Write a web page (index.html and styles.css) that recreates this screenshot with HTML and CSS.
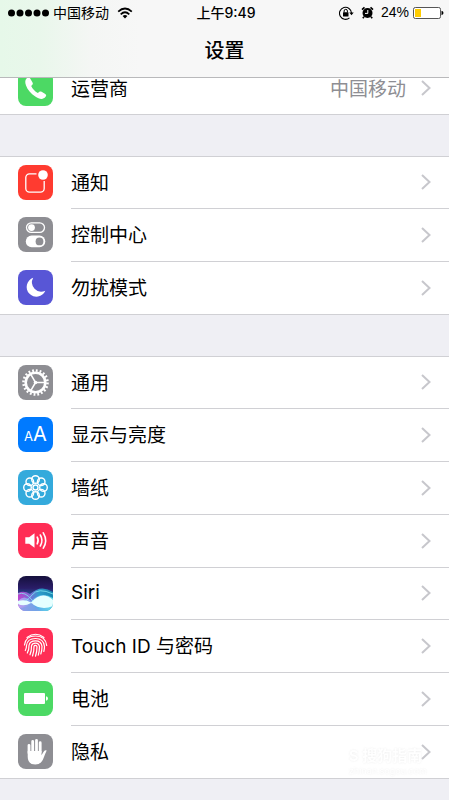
FILE: index.html
```html
<!DOCTYPE html>
<html lang="zh-CN">
<head>
    <meta charset="UTF-8">
    <meta name="viewport" content="width=device-width, initial-scale=1.0">
    <title>设置</title>
    <link rel="stylesheet" href="styles.css">
</head>
<body>
    <header class="top">
        <div class="status">
            <div class="status-left">
                <svg class="signal" width="41" height="8" viewBox="0 0 41 8"><circle cx="3.5" cy="4" r="3.5"/><circle cx="12" cy="4" r="3.5"/><circle cx="20.500" cy="4" r="3.5"/><circle cx="29" cy="4" r="3.5"/><circle cx="37.500" cy="4" r="3.5"/></svg>
                <span>中国移动</span>
                <svg class="wifi" width="16" height="12" viewBox="0 0 16 12"><path d="M1.200 4.700Q8-1.700 14.800 4.700" fill="none" stroke="#000" stroke-width="1.700"/><path d="M3.700 7.300Q8 3.200 12.300 7.300" fill="none" stroke="#000" stroke-width="1.700"/><path d="M5.600 9Q8 7 10.400 9L8 11.500Z"/></svg>
            </div>
            <time class="clock">上午9:49</time>
            <div class="status-right">
                <svg width="15" height="14" viewBox="0 0 15 14"><path d="M10.500 11.800A6 6 0 1 1 12.500 7" fill="none" stroke="#000" stroke-width="1.100"/><path d="M10.300 6.400h4.400l-2.200 2.900Z"/><rect x="4" y="6.200" width="5.500" height="4.300" rx=".5"/><path d="M5.100 6.500V5a1.650 1.650 0 0 1 3.300 0v1.500" fill="none" stroke="#000"/></svg>
                <svg class="alarm" width="13" height="13" viewBox="0 0 13 13"><circle cx="6.500" cy="7" r="5"/><path d="M1 3.700 3.500 1.300M12 3.700 9.500 1.300M3 10.800l-1.200 1.500M10 10.800l1.200 1.500" stroke="#000" stroke-width="1.600"/><path d="M6.800 4v3.400H4" fill="none" stroke="#fff"/></svg>
                <span class="percent">24%</span>
                <svg width="31" height="12" viewBox="0 0 31 12"><rect x=".5" y=".5" width="27" height="11" rx="1.800" fill="#fff" stroke="#555"/><path d="M2 2h6v8H2Z" fill="#fc0"/><path d="M28.500 3.800q2 .6 2 2.200t-2 2.200Z"/></svg>
            </div>
        </div>
        <h1>设置</h1>
    </header>

    <main>
        <ul class="group">
            <li><a href="#carrier">
                <svg class="icon" viewBox="0 0 35 35"><rect width="35" height="35" rx="8" fill="#4cd964"/><path d="M8.500 7.500C10 6 11.500 6.300 12.500 8l2 3.500c.8 1.400.2 2.100-1.300 3.500 1.500 3.200 3.700 5.400 6.600 7 1.500-1.600 2.400-2 3.800-1.200l3.300 2c1.400.9 1.700 1.700.7 3-2.500 3.200-6.200 2.500-10.300-.2-4.400-2.900-7.700-6.600-9.300-11-.9-2.700-1.200-5.300.5-7.100Z" fill="#fff"/></svg>
                <span class="label">运营商</span><span class="value">中国移动</span>
                <svg class="arrow" viewBox="0 0 10 16"><path d="m1 1 7.500 7L1 15"/></svg>
            </a></li>
        </ul>

        <ul class="group">
            <li><a href="#notifications">
                <svg class="icon" viewBox="0 0 35 35"><rect width="35" height="35" rx="8" fill="#ff3b30"/><path d="M18.500 8.800H11.500A3.700 3.700 0 0 0 7.800 12.500v11a3.700 3.700 0 0 0 3.700 3.700h11a3.700 3.700 0 0 0 3.700-3.700V16" fill="none" stroke="#fff" stroke-width="1.300"/><circle cx="25" cy="10" r="4.800" fill="#fff"/></svg>
                <span class="label">通知</span>
                <svg class="arrow" viewBox="0 0 10 16"><path d="m1 1 7.500 7L1 15"/></svg>
            </a></li>
            <li><a href="#control-center">
                <svg class="icon" viewBox="0 0 35 35"><rect width="35" height="35" rx="8" fill="#8e8e93"/><rect x="8.500" y="5.800" width="18" height="9.600" rx="4.800" fill="none" stroke="#fff" stroke-width="1.300"/><circle cx="13.500" cy="10.600" r="3.400" fill="#fff"/><rect x="7.800" y="18.600" width="19.500" height="11.600" rx="5.800" fill="#fff"/><circle cx="21.500" cy="24.400" r="3.900" fill="#8e8e93"/></svg>
                <span class="label">控制中心</span>
                <svg class="arrow" viewBox="0 0 10 16"><path d="m1 1 7.500 7L1 15"/></svg>
            </a></li>
            <li><a href="#do-not-disturb">
                <svg class="icon" viewBox="0 0 35 35"><rect width="35" height="35" rx="8" fill="#5856d6"/><path d="M15.200 7.800A9.700 9.700 0 1 0 27.300 20.700 9.300 9.300 0 0 1 15.200 7.800Z" fill="#fff"/></svg>
                <span class="label">勿扰模式</span>
                <svg class="arrow" viewBox="0 0 10 16"><path d="m1 1 7.500 7L1 15"/></svg>
            </a></li>
        </ul>

        <ul class="group">
            <li><a href="#general">
                <svg class="icon" viewBox="0 0 35 35"><rect width="35" height="35" rx="8" fill="#8e8e93"/><g fill="none" stroke="#fff"><circle cx="17.500" cy="17.500" r="12" stroke-width="2.600" stroke-dasharray="1.800 1.970"/><circle cx="17.500" cy="17.500" r="9.800" stroke-width="2.600"/><path d="M17.500 17.500h9M17.500 17.500l-4.700-8.100M17.500 17.500l-4.700 8.100" stroke-width="1.500"/></g><circle cx="17.500" cy="17.500" r="1.800" fill="#fff"/></svg>
                <span class="label">通用</span>
                <svg class="arrow" viewBox="0 0 10 16"><path d="m1 1 7.500 7L1 15"/></svg>
            </a></li>
            <li><a href="#display">
                <svg class="icon" viewBox="0 0 35 35"><rect width="35" height="35" rx="8" fill="#007aff"/><g class="letters"><text x="6" y="24" font-size="13">A</text><text x="15" y="24" font-size="20">A</text></g></svg>
                <span class="label">显示与亮度</span>
                <svg class="arrow" viewBox="0 0 10 16"><path d="m1 1 7.500 7L1 15"/></svg>
            </a></li>
            <li><a href="#wallpaper">
                <svg class="icon" viewBox="0 0 35 35"><rect width="35" height="35" rx="8" fill="#34aadc"/><g fill="none" stroke="#fff" stroke-width="1.400"><circle cx="17.500" cy="9.500" r="3.800"/><circle cx="23.200" cy="11.800" r="3.800"/><circle cx="25.500" cy="17.500" r="3.800"/><circle cx="23.200" cy="23.200" r="3.800"/><circle cx="17.500" cy="25.500" r="3.800"/><circle cx="11.800" cy="23.200" r="3.800"/><circle cx="9.500" cy="17.500" r="3.800"/><circle cx="11.800" cy="11.800" r="3.800"/><circle cx="17.500" cy="17.500" r="2.500"/></g></svg>
                <span class="label">墙纸</span>
                <svg class="arrow" viewBox="0 0 10 16"><path d="m1 1 7.500 7L1 15"/></svg>
            </a></li>
            <li><a href="#sounds">
                <svg class="icon" viewBox="0 0 35 35"><rect width="35" height="35" rx="8" fill="#ff2d55"/><path d="M7.300 14.200h3.900l5.300-3.900v14.400l-5.300-3.900H7.300Z" fill="#fff"/><path d="M19.200 14.200q1.900 3.300 0 6.600M22.300 12q3.300 5.500 0 11M25.300 9.800q4.700 7.700 0 15.400" fill="none" stroke="#fff" stroke-width="1.600" stroke-linecap="round"/></svg>
                <span class="label">声音</span>
                <svg class="arrow" viewBox="0 0 10 16"><path d="m1 1 7.500 7L1 15"/></svg>
            </a></li>
            <li><a href="#siri">
                <svg class="icon" viewBox="0 0 35 35">
                    <defs>
                        <clipPath id="tile"><rect width="35" height="35" rx="8"/></clipPath>
                        <linearGradient id="night" x2="0" y2="1"><stop stop-color="#15103c"/><stop offset=".35" stop-color="#2a1d68"/><stop offset=".65" stop-color="#236fb2"/><stop offset="1" stop-color="#8edbf1"/></linearGradient>
                        <linearGradient id="wave"><stop stop-color="#e03bd6"/><stop offset=".35" stop-color="#8f6fe4"/><stop offset=".6" stop-color="#2fb4dc"/><stop offset="1" stop-color="#1795b8"/></linearGradient>
                        <linearGradient id="low"><stop stop-color="#c79af0"/><stop offset=".5" stop-color="#5da8ea"/><stop offset="1" stop-color="#65dbe9"/></linearGradient>
                    </defs>
                    <g clip-path="url(#tile)">
                        <rect width="35" height="35" fill="url(#night)"/>
                        <path d="M0 17q6-3 12 1 11-10 23-2v19H0Z" fill="url(#wave)" opacity=".8"/>
                        <path d="M0 25q6-7 13 0Q23 15 35 22v13H0Z" fill="url(#low)"/>
                        <path d="M0 18q7-3 14 6t21 4M0 27q8 0 14-8t21-1" fill="none" stroke="#83e9f3" stroke-width=".8"/>
                        <path d="M0 25q7-2 13 1.500Q24 14 35 24v6Q23 35 13 27 6 31 0 28Z" fill="#e5ffff"/>
                        <path d="M0 32q9 0 14-5 3 5 9 8H0Z" fill="#7e9fe5" opacity=".7"/>
                    </g>
                </svg>
                <span class="label">Siri</span>
                <svg class="arrow" viewBox="0 0 10 16"><path d="m1 1 7.500 7L1 15"/></svg>
            </a></li>
            <li><a href="#touch-id">
                <svg class="icon" viewBox="0 0 35 35"><rect width="35" height="35" rx="8" fill="#ff2d55"/><g fill="none" stroke="#fff" stroke-width="1.200" stroke-linecap="round"><path d="M9 9.500q8.500-6.500 17 0"/><path d="M6.500 17q1-9 11-9t11.200 9.500"/><path d="M7.300 22.500q1.200-2 1.200-5 .8-7 9-7t9 8q0 2.500-.7 5"/><path d="M9.300 25q1.800-3.200 1.700-7.500.8-4.600 6.500-4.600t6.500 5.400q0 4.500-1.200 7.700"/><path d="M12 26.800q1.700-4 1.500-9 .7-2.600 4-2.600t4 3.400q0 4.500-1.200 8.600"/><path d="M14.500 28q1.700-5 1.500-9.700.2-1 1.500-1t1.500 1.500q0 4.700-1.500 9.400"/></g></svg>
                <span class="label">Touch ID 与密码</span>
                <svg class="arrow" viewBox="0 0 10 16"><path d="m1 1 7.500 7L1 15"/></svg>
            </a></li>
            <li><a href="#battery">
                <svg class="icon" viewBox="0 0 35 35"><rect width="35" height="35" rx="8" fill="#4cd964"/><rect x="6" y="12" width="21" height="11" rx="1" fill="#fff"/><path d="M28 15.200q2 .5 2 2.300t-2 2.300Z" fill="#fff"/></svg>
                <span class="label">电池</span>
                <svg class="arrow" viewBox="0 0 10 16"><path d="m1 1 7.500 7L1 15"/></svg>
            </a></li>
            <li><a href="#privacy">
                <svg class="icon" viewBox="0 0 35 35"><rect width="35" height="35" rx="8" fill="#8e8e93"/><g fill="none" stroke="#fff" stroke-width="2.800" stroke-linecap="round"><path d="M11 19v-7.700M14.700 18V7.500M18.500 18V6.300M22.200 18V8.700"/></g><path d="M9.700 17h13.800v4.200q1.400-2.400 2.500-4 1.100-1.400 2.700-.7-1.700 3.600-3 7.200-2.300 6.800-8.400 6.800-7.600 0-7.600-7.700Z" fill="#fff"/></svg>
                <span class="label">隐私</span>
                <svg class="arrow" viewBox="0 0 10 16"><path d="m1 1 7.500 7L1 15"/></svg>
            </a></li>
        </ul>
    </main>

    <div class="watermark">
        <strong><i>S</i> 搜狗指南</strong>
        <small>zhinan.sogou.com</small>
    </div>
</body>
</html>
```
FILE: styles.css
```css
* {
    box-sizing: border-box;
}

body {
    margin: 0;
    background-color: #efeff4;
    color: #000;
    font-family: Inter, "Noto Sans CJK SC", sans-serif;
    font-size: 19px;
}

svg {
    display: block;
    flex-shrink: 0;
}

/* Status bar and title stay above the list */
.top {
    position: fixed;
    top: 0;
    left: 0;
    right: 0;
    z-index: 1;
    height: 78px;
    border-bottom: 1px solid #b9b9bb;
    background: linear-gradient(90deg, #e6f8e9 0, #e9f7eb 40px, #f4f6f4 90px, #f7f7f7 140px);
}

.status {
    display: grid;
    grid-template-columns: 1fr auto 1fr;
    align-items: center;
    height: 25px;
    padding: 0 5px 0 8px;
    font-size: 14px;
    line-height: 25px;
}

.status-left,
.status-right {
    display: flex;
    align-items: center;
}

.status-right {
    justify-content: flex-end;
}

.signal {
    margin-right: 4px;
}

.wifi {
    margin-left: 8px;
}

.clock {
    font-weight: 500;
}

.alarm {
    margin: 0 7px;
}

.percent {
    margin-right: 4px;
    font-family: "Liberation Sans", sans-serif;
}

h1 {
    margin: 0;
    font-size: 20px;
    font-weight: 500;
    line-height: 52px;
    text-align: center;
}

main {
    padding-top: 62px;
    padding-bottom: 21px;
}

.group {
    margin: 0 0 41px;
    padding: 0;
    list-style: none;
    background-color: #fff;
    border-top: 1px solid #d0d0d4;
    border-bottom: 1px solid #d0d0d4;
}

.group:last-child {
    margin-bottom: 0;
}

.group a {
    display: flex;
    align-items: center;
    height: 53px;
    padding: 0 18px 2px;
    color: #000;
    text-decoration: none;
}

.group li:nth-child(4n + 1) a {
    height: 52px;
}

.icon {
    width: 35px;
    height: 35px;
    margin-right: 18px;
}

.letters {
    fill: #fff;
    font-family: Inter, sans-serif;
}

.label,
.value {
    padding-bottom: 2px;
}

.label {
    flex: 1;
}

/* Divider starts at the label, not at the icon */
.group li:not(:last-child) {
    background: linear-gradient(#d0d0d4, #d0d0d4) 71px 100% / 100% 1px no-repeat;
}

.group li:last-child a {
    margin-bottom: -1px;
}

.value {
    margin-right: 15px;
    color: #8e8e93;
}

.arrow {
    width: 10px;
    height: 16px;
    fill: none;
    stroke: #c7c7cc;
    stroke-width: 2;
}

.watermark {
    position: fixed;
    right: 22px;
    bottom: 23px;
    display: flex;
    flex-direction: column;
    color: #fff;
    opacity: 0.6;
    text-shadow: 0 0 2px #ddd;
    pointer-events: none;
}

.watermark strong {
    font-size: 15px;
    line-height: 18px;
}

.watermark i {
    font-style: normal;
}

.watermark small {
    font-size: 9px;
    line-height: 12px;
}
```
